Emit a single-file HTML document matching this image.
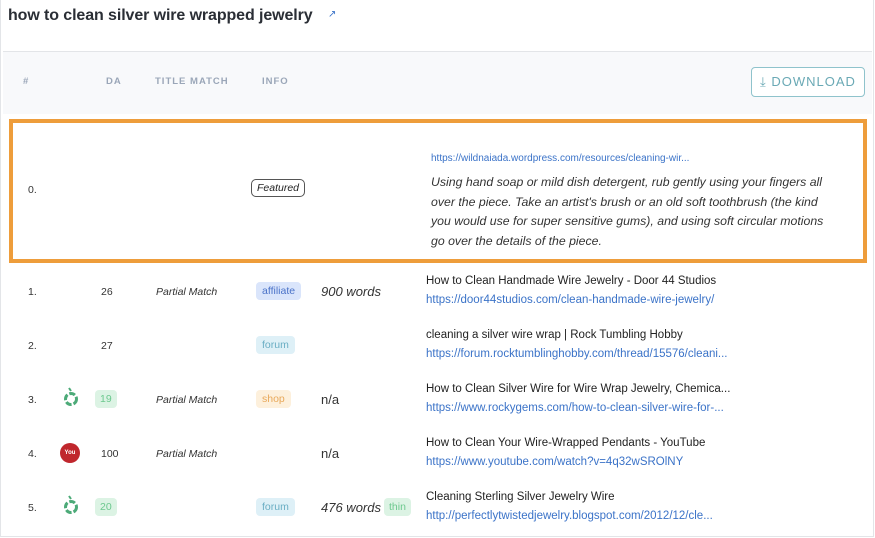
<!DOCTYPE html><html><head><style>
body{margin:0;width:875px;height:538px;background:#fff;font-family:"Liberation Sans",sans-serif;position:relative;overflow:hidden;color:#222}
.a{position:absolute;white-space:nowrap}
.frame{position:absolute;left:0;top:0;width:872px;height:536px;border:1px solid #e3e5e8;border-top:none}
.t{font-size:16px;font-weight:bold;color:#2a2e35;letter-spacing:-.1px}
.hd{font-size:9.5px;color:#9aa6b8;letter-spacing:1px;font-weight:bold}
.n{font-size:10.5px;color:#333}
.pm{font-size:10.5px;font-style:italic;color:#333}
.tag{font-size:10.5px;padding:3px 6px;border-radius:4px}
.ti{font-size:11.5px;color:#222}
.u{font-size:11.5px;color:#3b73c8}
.w{font-size:13px;font-style:italic;color:#333}
</style></head><body>
<div class="frame"></div>
<div class="a t" style="left:8px;top:7px">how to clean silver wire wrapped jewelry</div>
<div class="a" style="left:328px;top:9px;font-size:10px;color:#3b73c8">&#8599;</div>
<div class="a" style="left:3px;top:51px;width:869px;height:62px;background:#f8f9fb;border-top:1px solid #e3e5e8"></div>
<div class="a hd" style="left:23px;top:76px">#</div>
<div class="a hd" style="left:106px;top:76px">DA</div>
<div class="a hd" style="left:155px;top:76px">TITLE MATCH</div>
<div class="a hd" style="left:262px;top:76px">INFO</div>
<div class="a" style="left:751px;top:67px;width:112px;height:28px;border:1px solid #8fc3cc;border-radius:4px;background:#fff;color:#6aa9b5;font-size:13px;letter-spacing:1px;line-height:28px;text-align:center">&#10515; DOWNLOAD</div>
<div class="a" style="left:9px;top:119px;width:850px;height:136px;border:4px solid #ee9d3b"></div>
<div class="a n" style="left:28px;top:184px">0.</div>
<div class="a" style="left:251px;top:179px;font-size:10.5px;font-style:italic;border:1px solid #555;border-radius:5px;padding:2px 5px">Featured</div>
<div class="a" style="left:431px;top:153px;font-size:10px;color:#3b73c8">https://wildnaiada.wordpress.com/resources/cleaning-wir...</div>
<div class="a" style="left:431px;top:173px;font-size:12.3px;font-style:italic;color:#333;line-height:19.5px;white-space:normal;width:405px">Using hand soap or mild dish detergent, rub gently using your fingers all over the piece. Take an artist's brush or an old soft toothbrush (the kind you would use for super sensitive gums), and using soft circular motions go over the details of the piece.</div>

<div class="a n" style="left:28px;top:286px">1.</div><div class="a n" style="left:101px;top:286px">26</div><div class="a pm" style="left:156px;top:286px">Partial Match</div>
<div class="a tag" style="left:256px;top:282px;background:#dae5fb;color:#4a72c8">affiliate</div>
<div class="a w" style="left:321px;top:284px">900 words</div>
<div class="a ti" style="left:426px;top:275px">How to Clean Handmade Wire Jewelry - Door 44 Studios</div>
<div class="a u" style="left:426px;top:294px">https://door44studios.com/clean-handmade-wire-jewelry/</div>

<div class="a n" style="left:28px;top:340px">2.</div><div class="a n" style="left:101px;top:340px">27</div>
<div class="a tag" style="left:256px;top:336px;background:#def0f7;color:#6aaec4">forum</div>
<div class="a ti" style="left:426px;top:329px">cleaning a silver wire wrap | Rock Tumbling Hobby</div>
<div class="a u" style="left:426px;top:348px">https://forum.rocktumblinghobby.com/thread/15576/cleani...</div>

<div class="a n" style="left:28px;top:394px">3.</div>
<svg class="a" style="left:63px;top:386px" width="16" height="22" viewBox="0 0 16 22"><path d="M6 2l2 3" stroke="#4caa78" stroke-width="2"/><circle cx="8" cy="13" r="5.5" fill="none" stroke="#4caa78" stroke-width="3" stroke-dasharray="6 2"/></svg>
<div class="a tag" style="left:95px;top:390px;background:#dcf3e4;color:#6cc88e;padding:3px 5px">19</div>
<div class="a pm" style="left:156px;top:394px">Partial Match</div>
<div class="a tag" style="left:256px;top:390px;background:#fdf0dc;color:#e8a85a">shop</div>
<div class="a" style="left:321px;top:392px;font-size:13px;color:#333">n/a</div>
<div class="a ti" style="left:426px;top:383px">How to Clean Silver Wire for Wire Wrap Jewelry, Chemica...</div>
<div class="a u" style="left:426px;top:402px">https://www.rockygems.com/how-to-clean-silver-wire-for-...</div>

<div class="a n" style="left:28px;top:448px">4.</div>
<div class="a" style="left:60px;top:443px;width:20px;height:20px;border-radius:50%;background:#c0272d;color:#fff;font-size:6px;text-align:center;line-height:20px;font-weight:bold">You</div>
<div class="a n" style="left:101px;top:448px">100</div>
<div class="a pm" style="left:156px;top:448px">Partial Match</div>
<div class="a" style="left:321px;top:446px;font-size:13px;color:#333">n/a</div>
<div class="a ti" style="left:426px;top:437px">How to Clean Your Wire-Wrapped Pendants - YouTube</div>
<div class="a u" style="left:426px;top:456px">https://www.youtube.com/watch?v=4q32wSROlNY</div>

<div class="a n" style="left:28px;top:502px">5.</div>
<svg class="a" style="left:63px;top:494px" width="16" height="22" viewBox="0 0 16 22"><path d="M6 2l2 3" stroke="#4caa78" stroke-width="2"/><circle cx="8" cy="13" r="5.5" fill="none" stroke="#4caa78" stroke-width="3" stroke-dasharray="6 2"/></svg>
<div class="a tag" style="left:95px;top:498px;background:#dcf3e4;color:#6cc88e;padding:3px 5px">20</div>
<div class="a tag" style="left:256px;top:498px;background:#def0f7;color:#6aaec4">forum</div>
<div class="a w" style="left:321px;top:500px">476 words</div>
<div class="a tag" style="left:384px;top:498px;background:#dcf3e4;color:#6cc88e;padding:3px 5px">thin</div>
<div class="a ti" style="left:426px;top:491px">Cleaning Sterling Silver Jewelry Wire</div>
<div class="a u" style="left:426px;top:510px">http://perfectlytwistedjewelry.blogspot.com/2012/12/cle...</div>
</body></html>
